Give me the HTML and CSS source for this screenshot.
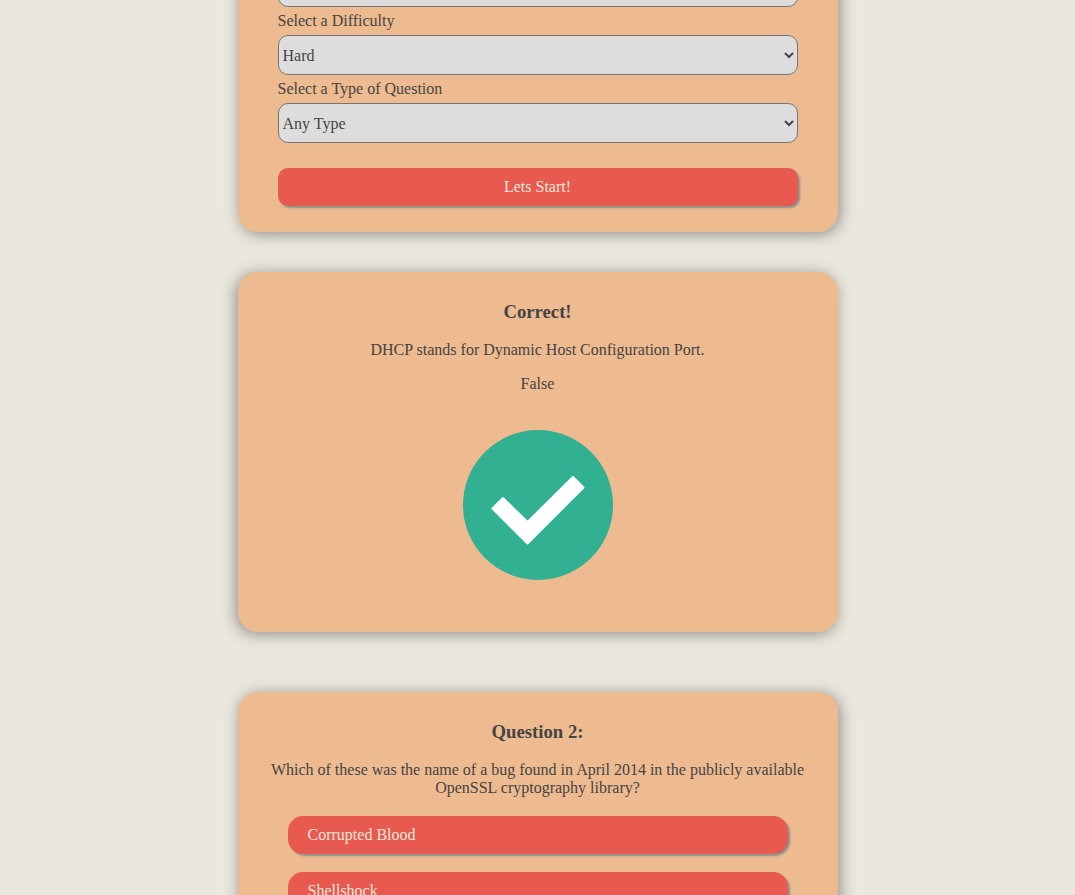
FILE: index.html
```html
<!DOCTYPE html>
<html lang="en">
<head>
<meta charset="utf-8">
<meta name="viewport" content="width=device-width, initial-scale=1">
<title>Quiz</title>
<link rel="stylesheet" href="styles.css">
</head>
<body>
<main class="quiz">
  <form class="card card-form">
    <select class="select" aria-label="Category"><option></option></select>
    <label class="label" for="difficulty">Select a Difficulty</label>
    <select class="select" id="difficulty"><option>Hard</option></select>
    <label class="label" for="type">Select a Type of Question</label>
    <select class="select" id="type"><option>Any Type</option></select>
    <button class="button start" type="button">Lets Start!</button>
  </form>

  <section class="card card-result">
    <h3 class="title">Correct!</h3>
    <p class="text">DHCP stands for Dynamic Host Configuration Port.</p>
    <p class="text">False</p>
    <svg class="check" viewBox="0 0 150 150" aria-hidden="true">
      <circle cx="75" cy="75" r="75" fill="#32b092"/>
      <path d="M40 68 64.500 92 110 47 120.500 57.500 64.500 113.500 29.500 78.500Z" fill="#fff" stroke="#fff" stroke-width="2" stroke-linejoin="round"/>
    </svg>
  </section>

  <section class="card card-question">
    <h3 class="title">Question 2:</h3>
    <p class="text">Which of these was the name of a bug found in April 2014 in the publicly available OpenSSL cryptography library?</p>
    <div class="answers">
      <button class="button answer" type="button">Corrupted Blood</button>
      <button class="button answer" type="button">Shellshock</button>
    </div>
  </section>
</main>
</body>
</html>
```

FILE: styles.css
```css
* {
  box-sizing: border-box;
}

body {
  margin: 0;
  height: 100vh;
  overflow: hidden;
  background: #eae7dc;
  color: #444;
  font: 16px/18px "Liberation Serif", "Times New Roman", serif;
}

.quiz {
  display: flex;
  flex-direction: column;
  align-items: center;
  margin-top: -73px;
}

.card {
  width: 100%;
  max-width: 600px;
  border-radius: 20px;
  background: #eebb90;
  box-shadow: 2px 2px 15px #8e8d8a;
}

.card-form {
  display: flex;
  flex-direction: column;
  padding: 40px 40px 26px;
}

.select {
  width: 100%;
  height: 40px;
  border: 1px solid #767676;
  border-radius: 10px;
  background: #ddd;
  color: #444;
  font: inherit;
}

.label {
  margin: 5px 0;
}

.button {
  height: 38px;
  border: 0;
  background: #e85a4f;
  box-shadow: 2px 2px 2px #8e8d8a;
  color: #eae7dc;
  font: inherit;
}

.start {
  margin-top: 25px;
  border-radius: 10px;
}

.card-result {
  display: flex;
  flex-direction: column;
  align-items: center;
  margin-top: 40px;
  padding: 29px 30px 52px;
  box-shadow: -2px 2px 15px #8e8d8a;
}

.title {
  margin: 0 0 18px;
  line-height: 22px;
  text-align: center;
}

.text {
  margin: 0 0 16px;
  text-align: center;
}

.check {
  width: 150px;
  height: 150px;
  margin-top: 21px;
}

.card-question {
  margin-top: 60px;
  padding: 29px 30px 40px;
}

.answers {
  display: flex;
  flex-direction: column;
  gap: 18px;
  padding: 3px 20px 0;
}

.answer {
  padding: 0 20px;
  border-radius: 15px;
  text-align: left;
}
```
